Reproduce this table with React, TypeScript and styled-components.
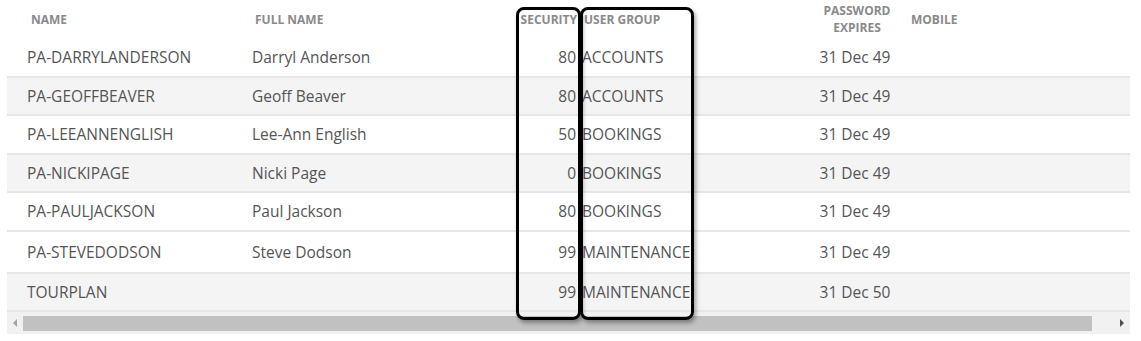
import React from "react";
import styled, { createGlobalStyle } from "styled-components";

const Global = createGlobalStyle`
  html, body { margin: 0; padding: 0; background: #ffffff; }
  body { font-family: "Open Sans", "Noto Sans", sans-serif; }
`;

const Page = styled.div`
  position: relative;
  width: 1141px;
  height: 341px;
  padding-left: 7px;
  box-sizing: border-box;
  overflow: hidden;
`;

const Grid = styled.div`
  width: 1123px;
`;

const cols = "225px 285px 63px 230px 90px 230px";

const HeaderRow = styled.div`
  display: grid;
  grid-template-columns: ${cols};
  height: 39px;
  padding-bottom: 1px;
  box-sizing: border-box;
  align-items: center;
`;

const HeadCell = styled.div<{ $align?: string; $pl?: number; $pr?: number }>`
  font-size: 12px;
  font-weight: 700;
  line-height: 17px;
  color: #8a8a8a;
  text-transform: uppercase;
  text-align: ${(p) => p.$align || "left"};
  padding-left: ${(p) => p.$pl ?? 0}px;
  padding-right: ${(p) => p.$pr ?? 0}px;
  white-space: nowrap;
`;

const Row = styled.div<{ $alt?: boolean; $h?: number }>`
  display: grid;
  grid-template-columns: ${cols};
  height: ${(p) => p.$h ?? 36.5}px;
  align-items: center;
  background: ${(p) => (p.$alt ? "#f4f4f4" : "#ffffff")};
  border-bottom: 2px solid #e6e6e6;
`;

const Cell = styled.div<{ $align?: string; $pl?: number; $pr?: number }>`
  font-size: 15.5px;
  color: #555555;
  text-align: ${(p) => p.$align || "left"};
  padding-left: ${(p) => p.$pl ?? 0}px;
  padding-right: ${(p) => p.$pr ?? 0}px;
  white-space: nowrap;
`;

const ScrollBar = styled.div`
  display: flex;
  align-items: center;
  height: 22px;
  background: #f1f1f1;
`;

const Arrow = styled.div<{ $dir: "left" | "right"; $dim?: boolean }>`
  width: 16px;
  display: flex;
  justify-content: center;
  &::before {
    content: "";
    border-top: 4px solid transparent;
    border-bottom: 4px solid transparent;
    ${(p) =>
      p.$dir === "left"
        ? `border-right: 4px solid ${p.$dim ? "#a3a3a3" : "#505050"};`
        : `border-left: 4px solid ${p.$dim ? "#a3a3a3" : "#505050"};`}
  }
`;

const Track = styled.div`
  flex: 1;
  height: 15px;
  display: flex;
  padding-right: 22px;
`;

const Thumb = styled.div`
  flex: 1;
  background: #c1c1c1;
`;

const Highlight = styled.div<{ $left: number; $width: number }>`
  position: absolute;
  top: 7px;
  left: ${(p) => p.$left}px;
  width: ${(p) => p.$width}px;
  height: 313px;
  box-sizing: border-box;
  border: 3px solid #000;
  border-radius: 8px;
  box-shadow: 2px 3px 4px rgba(0, 0, 0, 0.35);
  pointer-events: none;
`;

type User = {
  name: string;
  full: string;
  sec: string;
  group: string;
  exp: string;
  alt?: boolean;
  h?: number;
};

const users: User[] = [
  { name: "PA-DARRYLANDERSON", full: "Darryl Anderson", sec: "80", group: "ACCOUNTS", exp: "31 Dec 49" },
  { name: "PA-GEOFFBEAVER", full: "Geoff Beaver", sec: "80", group: "ACCOUNTS", exp: "31 Dec 49", alt: true },
  { name: "PA-LEEANNENGLISH", full: "Lee-Ann English", sec: "50", group: "BOOKINGS", exp: "31 Dec 49" },
  { name: "PA-NICKIPAGE", full: "Nicki Page", sec: "0", group: "BOOKINGS", exp: "31 Dec 49", alt: true },
  { name: "PA-PAULJACKSON", full: "Paul Jackson", sec: "80", group: "BOOKINGS", exp: "31 Dec 49" },
  { name: "PA-STEVEDODSON", full: "Steve Dodson", sec: "99", group: "MAINTENANCE", exp: "31 Dec 49", h: 40 },
  { name: "TOURPLAN", full: "", sec: "99", group: "MAINTENANCE", exp: "31 Dec 50", alt: true },
];

export default function App() {
  return (
    <Page>
      <Global />
      <Grid>
        <HeaderRow>
          <HeadCell $pl={24}>Name</HeadCell>
          <HeadCell $pl={23}>Full Name</HeadCell>
          <HeadCell $align="right" $pr={3}>Security</HeadCell>
          <HeadCell $pl={4}>User Group</HeadCell>
          <HeadCell $align="center" $pl={4}>
            Password
            <br />
            Expires
          </HeadCell>
          <HeadCell $pl={11}>Mobile</HeadCell>
        </HeaderRow>
        {users.map((u) => (
          <Row key={u.name} $alt={u.alt} $h={u.h}>
            <Cell $pl={20}>{u.name}</Cell>
            <Cell $pl={20}>{u.full}</Cell>
            <Cell $align="right" $pr={4}>{u.sec}</Cell>
            <Cell $pl={2}>{u.group}</Cell>
            <Cell $align="center">{u.exp}</Cell>
            <Cell $pl={11} />
          </Row>
        ))}
        <ScrollBar>
          <Arrow $dir="left" $dim />
          <Track>
            <Thumb />
          </Track>
          <Arrow $dir="right" />
        </ScrollBar>
      </Grid>
      <Highlight $left={516} $width={65} />
      <Highlight $left={580} $width={114} />
    </Page>
  );
}
